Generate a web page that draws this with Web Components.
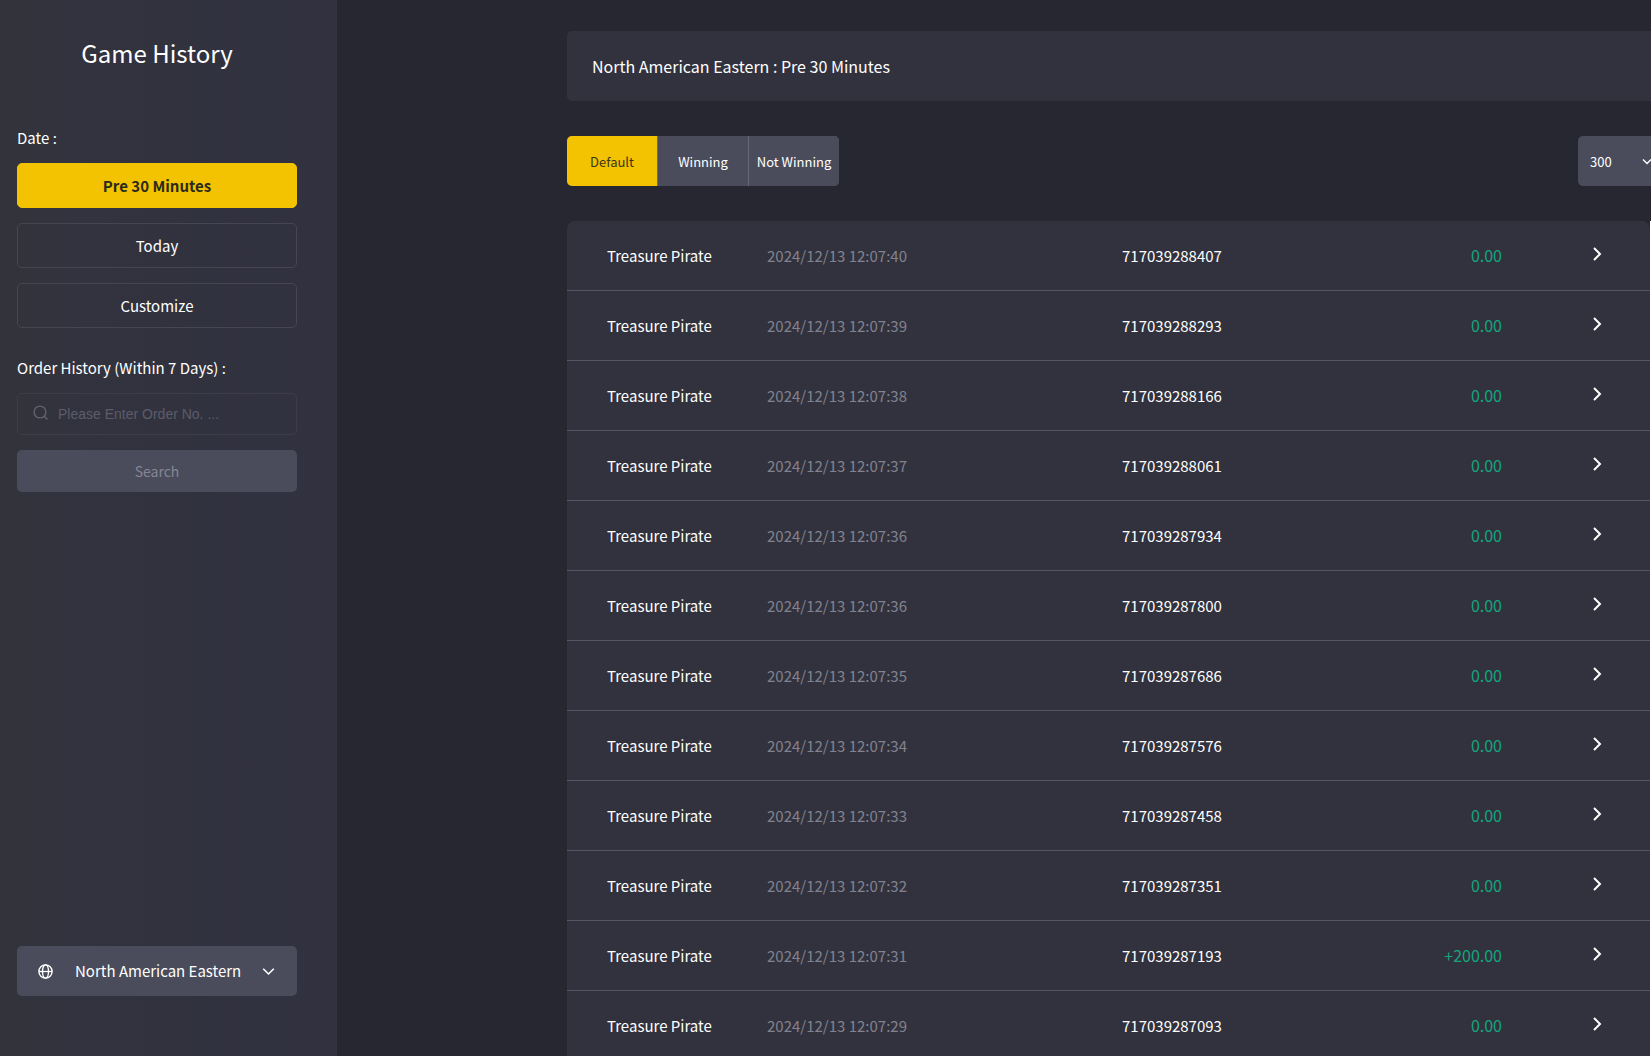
<!DOCTYPE html>
<html lang="en">
<head>
<meta charset="utf-8">
<meta name="viewport" content="width=device-width, initial-scale=1">
<title>Game History</title>
<style>
  :root {
    --page: #262731;
    --panel: #32323e;
    --control: #4a4c5b;
    --line: #555564;
    --outline: #464653;
    --accent: #f3c200;
    --ink: #ffffff;
    --muted: #82828e;
    --gain: #12a67d;
  }

  body {
    margin: 0;
    background: var(--page);
    color: var(--ink);
    font-family: "Noto Sans CJK KR", "Noto Sans", sans-serif;
    font-size: 15px;
    line-height: 20px;
  }
</style>
</head>
<body>
<history-app>
  <side-panel slot="side" heading="Game History">
    <date-filter label="Date :"></date-filter>
    <order-search label="Order History (Within 7 Days) :"></order-search>
    <zone-select slot="footer"></zone-select>
  </side-panel>
  <title-bar>North American Eastern : Pre 30 Minutes</title-bar>
  <result-toolbar></result-toolbar>
  <history-list></history-list>
</history-app>

<script>
(() => {
  const define = (name, html, setup) => {
    const template = document.createElement("template");
    template.innerHTML = `<style>
      *, *::before { box-sizing: border-box; }
      button, select { font: inherit; color: inherit; cursor: pointer; }
      svg { display: block; fill: none; stroke: currentColor; }
    </style>${html}`;
    customElements.define(name, class extends HTMLElement {
      connectedCallback() {
        if (this.shadowRoot) return;
        const root = this.attachShadow({ mode: "open" });
        root.append(template.content.cloneNode(true));
        if (setup) setup(this, root);
      }
    });
  };

  // Page frame: fixed-width sidebar, results fill the rest of the window.
  define("history-app", `
    <style>
      :host {
        display: grid;
        grid-template-columns: 337px minmax(0, 1fr);
        height: 100vh;
        overflow: hidden;
      }
      main {
        padding: 31px 0 0 230px;
        overflow: hidden;
      }
    </style>
    <slot name="side"></slot>
    <main><slot></slot></main>
  `);

  define("side-panel", `
    <style>
      :host {
        display: flex;
        flex-direction: column;
        min-height: 0;
        padding: 35px 40px 60px 17px;
        background: linear-gradient(90deg, #33333b, #32333e 20%, #313140);
      }
      h1 {
        margin: 0 0 57px;
        font-size: 24px;
        font-weight: 400;
        line-height: 36px;
        text-align: center;
      }
      .filters {
        display: grid;
        gap: 30px;
      }
      slot[name="footer"] {
        display: block;
        margin-top: auto;
      }
    </style>
    <h1></h1>
    <div class="filters"><slot></slot></div>
    <slot name="footer"></slot>
  `, (host, root) => {
    root.querySelector("h1").textContent = host.getAttribute("heading");
  });

  define("date-filter", `
    <style>
      :host { display: block; }
      [role="group"] {
        display: grid;
        gap: 15px;
        margin-top: 15px;
      }
      #label { display: block; height: 20px; }
      button {
        height: 45px;
        padding: 0;
        border: 1px solid var(--outline);
        border-radius: 5px;
        background: none;
      }
      button[aria-pressed="true"] {
        border-color: var(--accent);
        background: var(--accent);
        color: #2b2a1c;
        font-weight: 700;
      }
    </style>
    <span id="label"></span>
    <div role="group" aria-labelledby="label">
      <button type="button" aria-pressed="true">Pre 30 Minutes</button>
      <button type="button" aria-pressed="false">Today</button>
      <button type="button" aria-pressed="false">Customize</button>
    </div>
  `, (host, root) => {
    root.querySelector("#label").textContent = host.getAttribute("label");
  });

  define("order-search", `
    <style>
      :host { display: block; }
      form { display: grid; gap: 15px; }
      label { display: block; }
      .field {
        display: flex;
        align-items: center;
        gap: 9px;
        height: 42px;
        padding: 0 15px;
        border: 1px solid #3d3d4a;
        border-radius: 5px;
        color: #626270;
      }
      input {
        flex: 1;
        min-width: 0;
        padding: 0;
        border: 0;
        outline: 0;
        background: none;
        color: var(--ink);
        font: 14px/20px "Liberation Sans", Arial, sans-serif;
      }
      input::placeholder { color: #5c5c6a; opacity: 1; }
      button {
        height: 42px;
        padding: 0;
        border: 0;
        border-radius: 5px;
        background: var(--control);
        color: #858696;
        font-size: 14px;
      }
    </style>
    <form>
      <label for="order"></label>
      <div class="field">
        <svg width="16" height="18" viewBox="0 0 16 18" stroke-width="1.4" stroke-linecap="round">
          <circle cx="7" cy="7" r="5.9"/><path d="M11.2 11.2 14 14"/>
        </svg>
        <input id="order" type="text" placeholder="Please Enter Order No. ...">
      </div>
      <button type="button">Search</button>
    </form>
  `, (host, root) => {
    root.querySelector("label").textContent = host.getAttribute("label");
  });

  define("zone-select", `
    <style>
      :host {
        display: flex;
        align-items: center;
        height: 50px;
        padding: 0 22px 0 21px;
        border-radius: 5px;
        background: var(--control);
      }
      select {
        flex: 1;
        min-width: 0;
        height: 50px;
        padding: 0 0 0 22px;
        border: 0;
        outline: 0;
        appearance: none;
        background: none;
      }
      option { background: var(--control); }
    </style>
    <svg width="15" height="15" viewBox="0 0 15 15" stroke-width="1.4">
      <circle cx="7.5" cy="7.5" r="6.6"/><ellipse cx="7.5" cy="7.5" rx="3" ry="6.6"/>
      <path d="M1 7.5h13" stroke-width="1.3"/>
    </svg>
    <select aria-label="Time zone"><option>North American Eastern</option></select>
    <svg width="13" height="13" viewBox="0 0 13 13" stroke-width="1.6"><path d="m1.2 3.8 5.3 5.2 5.3-5.2"/></svg>
  `);

  define("title-bar", `
    <style>
      :host {
        display: flex;
        align-items: center;
        height: 70px;
        margin-right: -17px;
        padding: 0 25px;
        border-radius: 5px;
        background: var(--panel);
        box-sizing: border-box;
        font-size: 16px;
      }
    </style>
    <span><slot></slot></span>
  `);

  define("result-toolbar", `
    <style>
      :host {
        display: flex;
        justify-content: space-between;
        margin: 35px -17px 35px 0;
        font-size: 13px;
      }
      .tabs {
        display: grid;
        grid-template-columns: repeat(3, 90px);
        gap: 1px;
        overflow: hidden;
        border-radius: 5px;
        background: #666776;
      }
      button {
        height: 50px;
        padding: 2px 0 0;
        border: 0;
        background: var(--control);
        white-space: nowrap;
      }
      button[aria-pressed="true"] { background: var(--accent); color: #3b3619; }
      .size {
        display: flex;
        align-items: center;
        width: 90px;
        padding-right: 16px;
        border-radius: 5px;
        background: var(--control);
      }
      select {
        flex: 1;
        min-width: 0;
        height: 50px;
        padding: 2px 0 0 12px;
        border: 0;
        outline: 0;
        appearance: none;
        background: none;
      }
      option { background: var(--control); }
    </style>
    <div class="tabs" role="group" aria-label="Result">
      <button type="button" aria-pressed="true">Default</button>
      <button type="button" aria-pressed="false">Winning</button>
      <button type="button" aria-pressed="false">Not Winning</button>
    </div>
    <div class="size">
      <select aria-label="Rows"><option>300</option></select>
      <svg width="10" height="10" viewBox="0 0 10 10" stroke-width="1.4"><path d="m1 3.6 4 4 4-4"/></svg>
    </div>
  `);

  const rows = [
    ["12:07:40", "717039288407", "0.00"],
    ["12:07:39", "717039288293", "0.00"],
    ["12:07:38", "717039288166", "0.00"],
    ["12:07:37", "717039288061", "0.00"],
    ["12:07:36", "717039287934", "0.00"],
    ["12:07:36", "717039287800", "0.00"],
    ["12:07:35", "717039287686", "0.00"],
    ["12:07:34", "717039287576", "0.00"],
    ["12:07:33", "717039287458", "0.00"],
    ["12:07:32", "717039287351", "0.00"],
    ["12:07:31", "717039287193", "+200.00"],
    ["12:07:29", "717039287093", "0.00"],
  ];

  define("history-list", `
    <style>
      :host {
        display: block;
        border-right: 1px solid #fff;
        background: var(--page);
      }
      table {
        width: 100%;
        table-layout: fixed;
        border-spacing: 0;
        overflow: hidden;
        border-radius: 8px 8px 0 0;
        background: var(--panel);
      }
      .name { width: 200px; }
      .date { width: 355px; }
      .amount { width: 200px; }
      .open { width: 148px; }
      td {
        height: 70px;
        padding: 0;
        border-bottom: 1px solid var(--line);
      }
      td:first-child { padding-left: 40px; }
      td:nth-child(2) { color: var(--muted); }
      td:nth-child(4) {
        padding-bottom: 2px;
        color: var(--gain);
        font-size: 16px;
        text-align: right;
      }
      td:last-child { padding: 0 0 4px 89px; }
      button {
        display: block;
        padding: 0;
        border: 0;
        background: none;
      }
    </style>
    <table>
      <colgroup><col class="name"><col class="date"><col><col class="amount"><col class="open"></colgroup>
      <tbody></tbody>
    </table>
  `, (host, root) => {
    root.querySelector("tbody").innerHTML = rows.map(([time, order, amount]) => `
      <tr>
        <td>Treasure Pirate</td>
        <td>2024/12/13 ${time}</td>
        <td>${order}</td>
        <td>${amount}</td>
        <td><button type="button" aria-label="Details">
          <svg width="12" height="16" viewBox="0 0 12 16" stroke-width="2"><path d="m3 2 6 6-6 6"/></svg>
        </button></td>
      </tr>`).join("");
  });
})();
</script>
</body>
</html>
